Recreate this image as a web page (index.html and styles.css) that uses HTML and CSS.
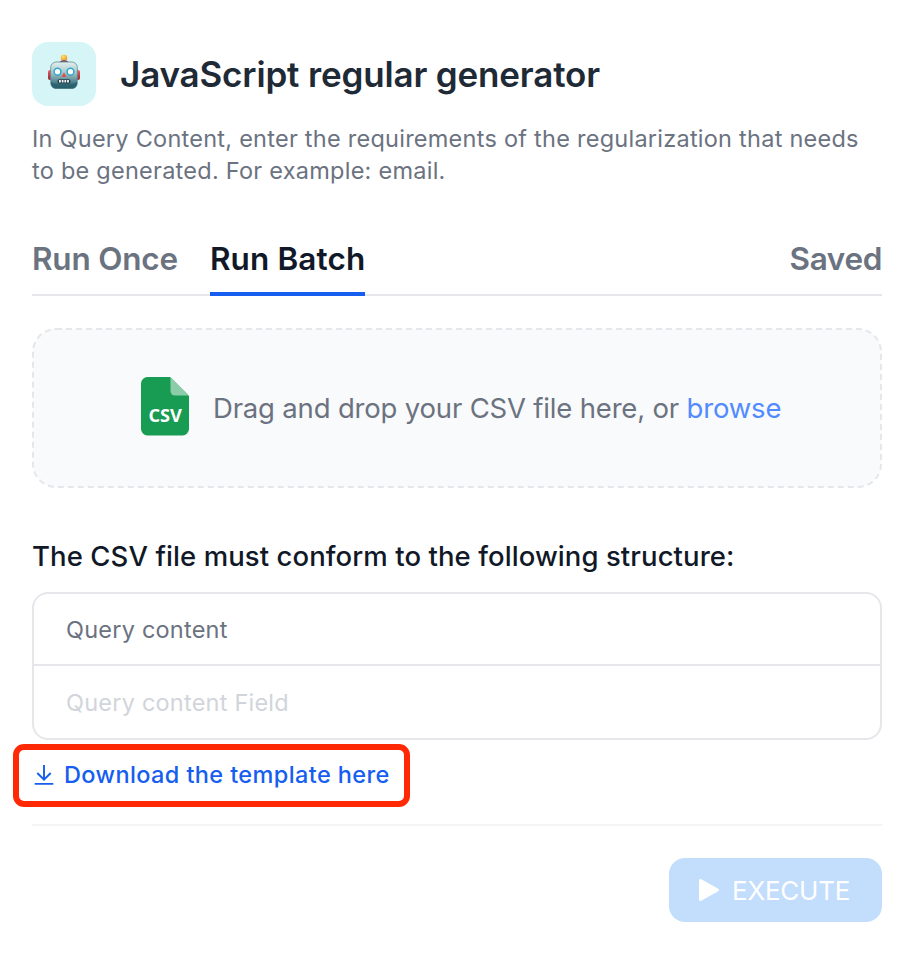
FILE: index.html
```html
<!DOCTYPE html>
<html lang="en">
<head>
<meta charset="utf-8">
<title>JavaScript regular generator</title>
<link rel="stylesheet" href="styles.css">
</head>
<body>
<main class="page">
  <header class="header">
    <div class="app-icon">
      <svg width="36" height="40" viewBox="0 0 36 40" aria-hidden="true">
        <defs>
          <linearGradient id="face" x1="0" y1="0" x2="0" y2="1">
            <stop offset="0" stop-color="#e2f0ef"/><stop offset=".4" stop-color="#a9c8cc"/><stop offset=".72" stop-color="#578995"/><stop offset="1" stop-color="#24606f"/>
          </linearGradient>
          <linearGradient id="ear" x1="0" y1="0" x2="0" y2="1">
            <stop offset="0" stop-color="#e8636a"/><stop offset="1" stop-color="#8f2630"/>
          </linearGradient>
          <radialGradient id="lamp" cx=".4" cy=".3" r=".7">
            <stop offset="0" stop-color="#ffe36b"/><stop offset="1" stop-color="#eb9320"/>
          </radialGradient>
        </defs>
        <rect x="2" y="18" width="6" height="10" rx="2" fill="url(#ear)"/>
        <rect x="28" y="18" width="6" height="10" rx="2" fill="url(#ear)"/>
        <circle cx="18" cy="6" r="3.2" fill="url(#lamp)"/>
        <path d="M13.5 10.5C14 7.4 22 7.4 22.500 10.500Z" fill="#67457f"/>
        <rect x="4.700" y="10" width="26.600" height="26.500" rx="5.500" fill="url(#face)" stroke="#648c91" stroke-width=".8"/>
        <path d="M5 29.500c2 2 4 2 5.500 2h15c2 0 4-.5 5.500-2v2c0 3-2 5-5 5H10c-3 0-5-2-5-5z" fill="#255c69" opacity=".7"/>
        <circle cx="11.500" cy="19.700" r="4.200" fill="#34a9ce"/><circle cx="11.500" cy="19.700" r="2.600" fill="#fff"/>
        <circle cx="24.500" cy="19.700" r="4.200" fill="#34a9ce"/><circle cx="24.500" cy="19.700" r="2.600" fill="#fff"/>
        <path d="M18 20.200l2.600 4.800h-5.200z" fill="#dc5450"/>
        <rect x="11.500" y="27.200" width="13" height="4.300" rx="2" fill="#243e48"/>
        <path d="M13 29.300h10" stroke="#f1f6f5" stroke-width="2.500" stroke-dasharray="1.800 .9"/>
      </svg>
    </div>
    <h1 class="title"><span>JavaScript regular generator</span></h1>
  </header>
  <p class="desc"><span>In Query Content, enter the requirements of the regularization that needs</span><br><span class="desc-end">to be generated. For example: email.</span></p>

  <nav class="tabs">
    <a class="tab once">Run Once</a>
    <a class="tab batch">Run Batch</a>
    <a class="tab saved">Saved</a>
  </nav>

  <section class="drop">
    <svg class="drop-border" width="850" height="160" aria-hidden="true"><rect x="1" y="1" width="848" height="158" rx="23" fill="#f9fafb" stroke="#e5e7eb" stroke-width="2" stroke-dasharray="6 4"/></svg>
    <svg class="csv" width="64" height="72" viewBox="0 0 64 72" aria-hidden="true">
      <path d="M14 4h23l19 19v33a6.500 6.500 0 0 1-6.500 6.500h-35A6.500 6.500 0 0 1 8 56V10.500A6.500 6.500 0 0 1 14.500 4z" fill="#189b52"/>
      <path d="M37.500 4L56 22.500H42a4.500 4.500 0 0 1-4.500-4.500z" fill="#8bcda8"/>
      <text class="csv-label" x="32.200" y="49" text-anchor="middle" textLength="33.500" lengthAdjust="spacingAndGlyphs">CSV</text>
    </svg>
    <p class="drop-text">Drag and drop your CSV file here, or <a class="browse">browse</a></p>
  </section>

  <h2 class="subtitle"><span>The CSV file must conform to the following structure:</span></h2>
  <div class="table">
    <div class="row"><span>Query content</span></div>
    <div class="row placeholder"><span>Query content Field</span></div>
  </div>

  <a class="download">
    <svg width="20" height="22" viewBox="0 0 20 22" fill="none" stroke="#155eef" stroke-width="1.900" aria-hidden="true"><path d="M10 1v14.500M3.300 9L10 15.700 16.700 9M.700 19.900h18.600"/></svg>
    <span>Download the template here</span>
  </a>

  <footer class="footer">
    <button class="execute" disabled>
      <svg width="22" height="24" viewBox="0 0 22 24" aria-hidden="true"><path d="M2.500 2.500v19L19.500 12z" fill="#fff" stroke="#fff" stroke-width="3" stroke-linejoin="round"/></svg>
      <span>EXECUTE</span>
    </button>
  </footer>
</main>
</body>
</html>
```
FILE: styles.css
```css
* { box-sizing: border-box; }
body { margin: 0; background: #fff; font-family: Inter, sans-serif; }
h1, h2, p { margin: 0; }
.page { width: 882px; padding: 42px 0 0 32px; white-space: nowrap; }
.header { display: flex; align-items: center; gap: 24px; height: 64px; }
.app-icon { display: flex; align-items: center; justify-content: center; width: 64px; height: 64px; border-radius: 16px; background: #d5f5f6; }
.app-icon svg { margin-bottom: 4px; }
.title { font-size: 35px; line-height: 56px; font-weight: 600; color: #1f2a37; letter-spacing: -0.16px; }
.desc { margin-top: 17px; font-size: 23.5px; line-height: 32px; color: #6b7280; letter-spacing: 0.25px; }
.tabs { display: flex; gap: 32px; height: 80px; margin-top: 29px; border-bottom: 2px solid #e5e7eb; }
.tab { height: 80px; padding-top: 19px; font-size: 31.5px; line-height: 48px; font-weight: 600; color: #6b7280; letter-spacing: -0.2px; }
.batch { color: #111928; border-bottom: 4px solid #155eef; letter-spacing: 0.12px; }
.saved { margin-left: auto; letter-spacing: -0.35px; }
.drop { position: relative; display: flex; align-items: center; height: 160px; margin-top: 32px; padding-left: 101px; }
.drop-border { position: absolute; inset: 0; }
.csv { position: relative; margin-top: 1px; }
.csv-label { font: 700 18px "Open Sans", sans-serif; fill: #fff; }
.drop-text { position: relative; margin-left: 16px; font-size: 27.5px; line-height: 40px; color: #6b7280; letter-spacing: -0.18px; }
.browse { color: #528bff; }
.subtitle { margin-top: 48px; font-size: 27.5px; line-height: 40px; font-weight: 500; color: #111928; letter-spacing: 0.08px; }
.table { height: 148px; margin-top: 16px; border: 2px solid #e5e7eb; border-radius: 16px; }
.row { height: 70px; padding-left: 32px; line-height: 71px; font-size: 23.5px; color: #6b7280; letter-spacing: 0.22px; }
.row + .row { height: 74px; line-height: 73px; border-top: 2px solid #e5e7eb; }
.row.placeholder { color: #d1d5db; }
.download { display: flex; align-items: center; gap: 10px; width: 397px; height: 63px; margin: 4px 0 0 -19px; padding: 0 0 2px 15px; border: 6px solid #ff2a05; border-radius: 11px; color: #155eef; font-size: 23.5px; line-height: 32px; font-weight: 500; letter-spacing: 0.39px; }
.footer { display: flex; justify-content: flex-end; margin-top: 17px; padding-top: 32px; border-top: 2px solid #f3f4f6; }
.execute { display: flex; align-items: center; gap: 12px; width: 213px; height: 64px; padding: 0 0 0 29px; border: 0; border-radius: 16px; background: #c3ddfd; color: #fff; font: 400 26px/40px Inter, sans-serif; letter-spacing: -0.22px; }
.execute span { padding-top: 1px; }
```
